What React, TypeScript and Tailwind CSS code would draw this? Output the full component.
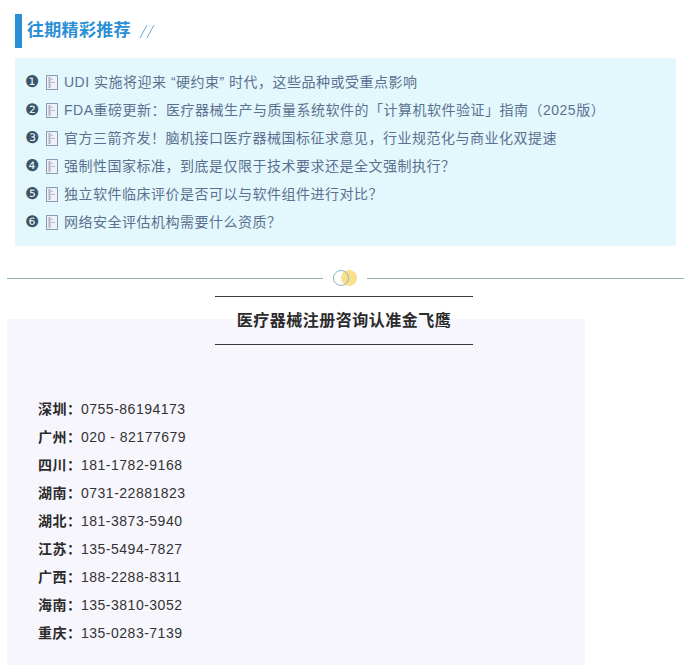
const cjk = 'font-["Liberation_Sans","Noto_Sans_CJK_SC",sans-serif]';

const articles = [
  'UDI 实施将迎来 “硬约束” 时代，这些品种或受重点影响',
  'FDA重磅更新：医疗器械生产与质量系统软件的「计算机软件验证」指南（2025版）',
  '官方三箭齐发！脑机接口医疗器械国标征求意见，行业规范化与商业化双提速',
  '强制性国家标准，到底是仅限于技术要求还是全文强制执行？',
  '独立软件临床评价是否可以与软件组件进行对比？',
  '网络安全评估机构需要什么资质？',
];

const phones = [
  ['深圳', '0755-86194173'],
  ['广州', '020 - 82177679'],
  ['四川', '181-1782-9168'],
  ['湖南', '0731-22881823'],
  ['湖北', '181-3873-5940'],
  ['江苏', '135-5494-7827'],
  ['广西', '188-2288-8311'],
  ['海南', '135-3810-3052'],
  ['重庆', '135-0283-7139'],
];

const DocIcon = () => (
  <svg width="12" height="15" viewBox="0 0 12 15" className="shrink-0">
    <rect x="0.5" y="0.5" width="11" height="14" fill="#eef2f6" stroke="#8c9ab4" />
    <path d="M3.5 2v11" stroke="#aab4c4" strokeWidth="2" />
    <path d="M5 4.5h2M5 7.5h4" stroke="#b4bdcb" />
  </svg>
);

export default function App() {
  return (
    <div className={`w-[700px] h-[665px] overflow-hidden bg-white ${cjk}`}>
      <div className="pt-[14px] pl-[15px] pr-[24px]">
        <div className="flex items-center h-[34px] border-l-[7px] border-[#2b8fd6] pl-[5px]">
          <span className="text-[17px] font-bold tracking-[0.3px] text-[#2b8fd6]">往期精彩推荐</span>
          <svg width="16" height="16" viewBox="0 0 16 16" className="ml-[8px]">
            <path d="M1 15 8 2M8 15 15 2" stroke="#6fa8dc" strokeWidth="1" fill="none" />
          </svg>
        </div>
        <div className="mt-[10px] h-[188px] bg-[#e3f8fc] pt-[10px] pl-[10px]">
          {articles.map((text, i) => (
            <div key={text} className="flex items-center h-[28px] text-[14px] tracking-[0.5px] text-[#5b7090]">
              <span className='w-[14px] text-center text-[16px] leading-none text-[#3b5468] font-["DejaVu_Sans"]'>
                {'❶❷❸❹❺❻'[i]}
              </span>
              <span className="ml-[7px] mr-[6px]">
                <DocIcon />
              </span>
              <span className="whitespace-nowrap">{text}</span>
            </div>
          ))}
        </div>
      </div>

      <div className="mt-[24px] ml-[7px] w-[677px] flex items-center">
        <div className="w-[316px] h-px bg-[#94b4b6]" />
        <div className="flex mx-[10px] w-[24px]">
          <div className="shrink-0 w-[16px] h-[16px] rounded-full border border-[#8fb8bd] relative z-10" />
          <div className="shrink-0 w-[16px] h-[16px] rounded-full bg-[#fae08c] -ml-[8px]" />
        </div>
        <div className="flex-1 h-px bg-[#94b4b6]" />
      </div>

      <div className="relative z-10 mt-[10px] ml-[215px] w-[258px] h-[49px] border-y border-[#3a3a3a] flex items-center justify-center">
        <span className="text-[16px] font-bold tracking-[0.5px] text-[#2b2b2b]">医疗器械注册咨询认准金飞鹰</span>
      </div>

      <div className="-mt-[26px] ml-[7px] w-[578px] h-[346px] bg-[#f7f6fd] pt-[76px] pl-[31px]">
        {phones.map(([city, phone]) => (
          <div key={city} className="flex items-center h-[28px] text-[14px] tracking-[0.5px] text-[#333333]">
            <span className="font-bold text-[#2b2b2b]">{city}：</span>
            <span className="-ml-[0.5px]">{phone}</span>
          </div>
        ))}
      </div>
    </div>
  );
}
